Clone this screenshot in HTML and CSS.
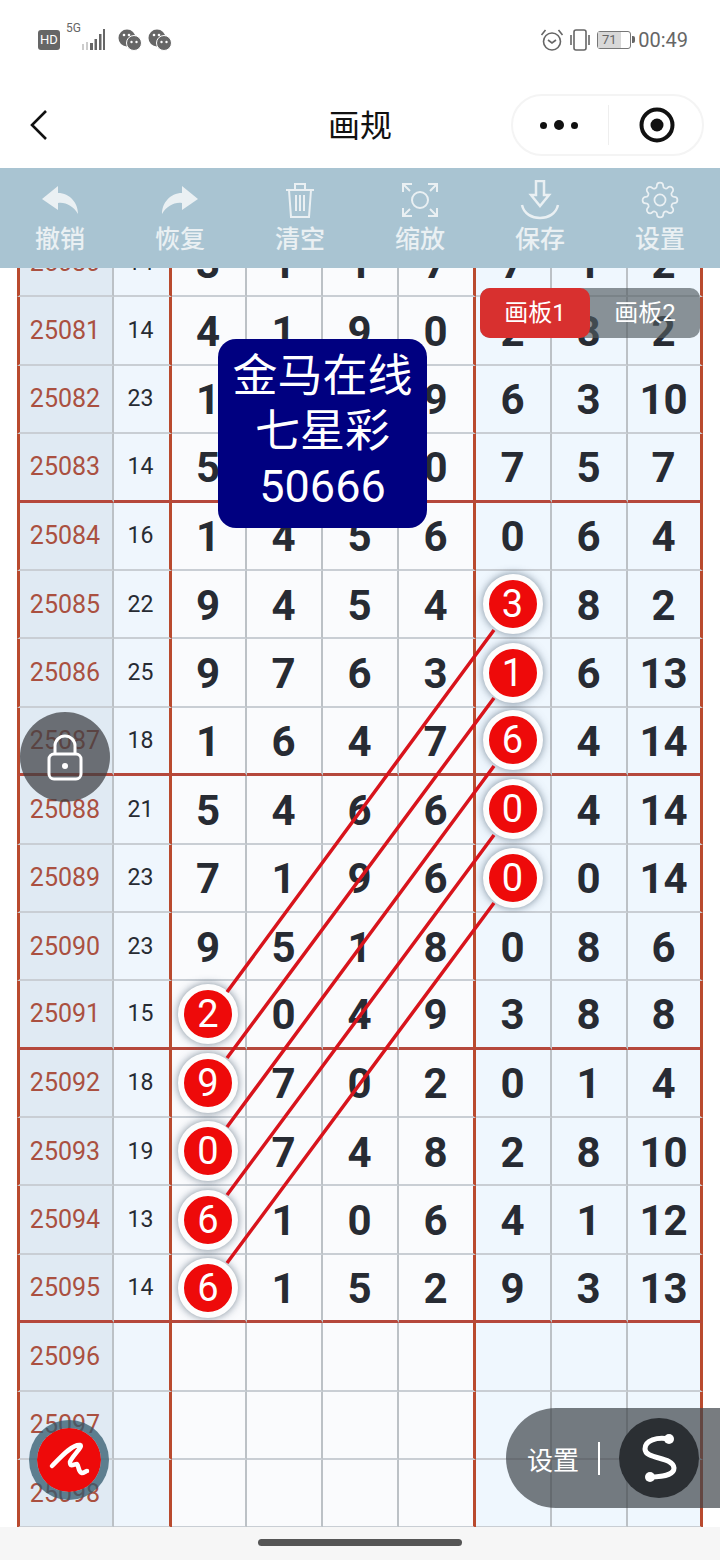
FILE: index.html
```html
<!DOCTYPE html>
<html lang="zh-CN">
  <head>
    <meta charset="UTF-8" />
    <meta name="viewport" content="width=device-width, initial-scale=1.0" />
    <title>画规</title>
    <link rel="stylesheet" href="styles.css">
  </head>
  <body>
    <div class="page">
      <div class="status">
        <div class="status-left">
          <span class="hd">HD</span>
          <span class="net">
            <span class="net-label">5G</span>
            <svg width="26" height="24" viewBox="0 0 26 24" fill="#666">
              <rect x="3" y="15" width="2" height="6" fill="#ccc"/>
              <rect x="7" y="13" width="2" height="8" fill="#ccc"/>
              <rect x="11" y="14" width="3" height="7"/>
              <rect x="15.500" y="10" width="2.500" height="11"/>
              <rect x="20" y="5" width="2.500" height="16"/>
              <rect x="24" y="0" width="2" height="21"/>
            </svg>
          </span>
          <svg class="wechat" width="24" height="22" viewBox="0 0 24 22">
            <circle cx="9" cy="9" r="8.500" fill="#666"/>
            <circle cx="16" cy="14" r="7.500" fill="#666" stroke="#fff" stroke-width="1"/>
            <circle cx="6" cy="6" r="1.300" fill="#fff"/>
            <circle cx="11" cy="6" r="1.300" fill="#fff"/>
            <circle cx="13.500" cy="13" r="1.200" fill="#fff"/>
            <circle cx="18.500" cy="13" r="1.200" fill="#fff"/>
          </svg>
          <svg class="wechat" width="24" height="22" viewBox="0 0 24 22">
            <circle cx="9" cy="9" r="8.500" fill="#666"/>
            <circle cx="16" cy="14" r="7.500" fill="#666" stroke="#fff" stroke-width="1"/>
            <circle cx="6" cy="6" r="1.300" fill="#fff"/>
            <circle cx="11" cy="6" r="1.300" fill="#fff"/>
            <circle cx="13.500" cy="13" r="1.200" fill="#fff"/>
            <circle cx="18.500" cy="13" r="1.200" fill="#fff"/>
          </svg>
        </div>
        <div class="status-right">
          <svg width="24" height="24" viewBox="0 0 24 24" fill="none" stroke="#666" stroke-width="1.600">
            <circle cx="12" cy="13.500" r="8.500"/>
            <path d="M8 12l4 3 4-3M1.500 7l4-5M22.500 7l-4-5"/>
          </svg>
          <svg width="22" height="22" viewBox="0 0 22 22" fill="none" stroke="#666" stroke-width="1.600">
            <rect x="5" y="1" width="12" height="20" rx="2"/>
            <path d="M2 6v10M20 6v10"/>
          </svg>
          <span class="battery"><span class="battery-level">71</span></span>
          <span class="clock">00:49</span>
        </div>
      </div>

      <header class="nav">
        <svg class="back" width="20" height="32" viewBox="0 0 20 32" fill="none" stroke="#111" stroke-width="2.600">
          <path d="M17 2L3 16l14 14"/>
        </svg>
        <h1>画规</h1>
        <div class="capsule">
          <div class="dots"><i></i><i class="big"></i><i></i></div>
          <div class="capsule-sep"></div>
          <svg width="36" height="36" viewBox="0 0 36 36">
            <circle cx="18" cy="18" r="15.500" fill="none" stroke="#111" stroke-width="4"/>
            <circle cx="18" cy="18" r="6.500" fill="#111"/>
          </svg>
        </div>
      </header>

      <div class="toolbar">
        <div class="tool">
          <svg width="36" height="30" viewBox="0 0 36 30"><path d="M16 1L0 14l16 11v-7c8-1 15 3 20 11 0-11-8-21-20-21z"/></svg>
          <span>撤销</span>
        </div>
        <div class="tool">
          <svg width="36" height="30" viewBox="0 0 36 30"><path d="M20 1l16 13-16 11v-7C12 17 5 21 0 29 0 18 8 8 20 8z"/></svg>
          <span>恢复</span>
        </div>
        <div class="tool">
          <svg class="line" width="32" height="38" viewBox="0 0 32 38">
            <path d="M2 9h28M11 8V3h10v5M5 9l2 27h18l2-27M12 14v16M16 14v16M20 14v16"/>
          </svg>
          <span>清空</span>
        </div>
        <div class="tool">
          <svg class="line" width="38" height="36" viewBox="0 0 38 36">
            <circle cx="19" cy="18" r="8"/>
            <path d="M2 10V2h9M2 2l7 7M36 10V2h-9M36 2l-7 7M2 26v8h9M2 34l7-7M36 26v8h-9M36 34l-7-7"/>
          </svg>
          <span>缩放</span>
        </div>
        <div class="tool">
          <svg class="line heavy" width="40" height="40" viewBox="0 0 40 40">
            <path d="M11 15h5V1h8v14h5L20 26zM2 25c2 9 10 13 18 13s16-4 18-13"/>
          </svg>
          <span>保存</span>
        </div>
        <div class="tool">
          <svg class="line thin" width="38" height="38" viewBox="0 0 24 24">
            <circle cx="12" cy="12" r="3.500"/>
            <path d="M19.400 15a1.650 1.650 0 0 0 .33 1.820l.06.06a2 2 0 0 1 0 2.830 2 2 0 0 1-2.830 0l-.06-.06a1.650 1.650 0 0 0-1.820-.33 1.650 1.650 0 0 0-1 1.510V21a2 2 0 0 1-2 2 2 2 0 0 1-2-2v-.09A1.650 1.650 0 0 0 9 19.400a1.650 1.650 0 0 0-1.820.33l-.06.06a2 2 0 0 1-2.830 0 2 2 0 0 1 0-2.830l.06-.06a1.650 1.650 0 0 0 .33-1.820 1.650 1.650 0 0 0-1.510-1H3a2 2 0 0 1-2-2 2 2 0 0 1 2-2h.09A1.650 1.650 0 0 0 4.600 9a1.650 1.650 0 0 0-.33-1.820l-.06-.06a2 2 0 0 1 0-2.830 2 2 0 0 1 2.830 0l.06.06a1.650 1.650 0 0 0 1.820.33H9a1.650 1.650 0 0 0 1-1.510V3a2 2 0 0 1 2-2 2 2 0 0 1 2 2v.09a1.650 1.650 0 0 0 1 1.510 1.650 1.650 0 0 0 1.820-.33l.06-.06a2 2 0 0 1 2.830 0 2 2 0 0 1 0 2.830l-.06.06a1.650 1.650 0 0 0-.33 1.820V9a1.650 1.650 0 0 0 1.510 1H21a2 2 0 0 1 2 2 2 2 0 0 1-2 2h-.09a1.650 1.650 0 0 0-1.510 1z"/>
          </svg>
          <span>设置</span>
        </div>
      </div>

      <div class="board">
        <div class="grid">
          <div class="row"><div>25080</div><div>14</div><div>3</div><div>1</div><div>1</div><div>7</div><div>7</div><div>1</div><div>2</div></div>
          <div class="row"><div>25081</div><div>14</div><div>4</div><div>1</div><div>9</div><div>0</div><div>2</div><div>8</div><div>2</div></div>
          <div class="row"><div>25082</div><div>23</div><div>1</div><div></div><div></div><div>9</div><div>6</div><div>3</div><div>10</div></div>
          <div class="row end"><div>25083</div><div>14</div><div>5</div><div></div><div></div><div>0</div><div>7</div><div>5</div><div>7</div></div>
          <div class="row"><div>25084</div><div>16</div><div>1</div><div>4</div><div>5</div><div>6</div><div>0</div><div>6</div><div>4</div></div>
          <div class="row"><div>25085</div><div>22</div><div>9</div><div>4</div><div>5</div><div>4</div><div><b class="ball">3</b></div><div>8</div><div>2</div></div>
          <div class="row"><div>25086</div><div>25</div><div>9</div><div>7</div><div>6</div><div>3</div><div><b class="ball">1</b></div><div>6</div><div>13</div></div>
          <div class="row end"><div>25087</div><div>18</div><div>1</div><div>6</div><div>4</div><div>7</div><div><b class="ball">6</b></div><div>4</div><div>14</div></div>
          <div class="row"><div>25088</div><div>21</div><div>5</div><div>4</div><div>6</div><div>6</div><div><b class="ball">0</b></div><div>4</div><div>14</div></div>
          <div class="row"><div>25089</div><div>23</div><div>7</div><div>1</div><div>9</div><div>6</div><div><b class="ball">0</b></div><div>0</div><div>14</div></div>
          <div class="row"><div>25090</div><div>23</div><div>9</div><div>5</div><div>1</div><div>8</div><div>0</div><div>8</div><div>6</div></div>
          <div class="row end"><div>25091</div><div>15</div><div><b class="ball">2</b></div><div>0</div><div>4</div><div>9</div><div>3</div><div>8</div><div>8</div></div>
          <div class="row"><div>25092</div><div>18</div><div><b class="ball">9</b></div><div>7</div><div>0</div><div>2</div><div>0</div><div>1</div><div>4</div></div>
          <div class="row"><div>25093</div><div>19</div><div><b class="ball">0</b></div><div>7</div><div>4</div><div>8</div><div>2</div><div>8</div><div>10</div></div>
          <div class="row"><div>25094</div><div>13</div><div><b class="ball">6</b></div><div>1</div><div>0</div><div>6</div><div>4</div><div>1</div><div>12</div></div>
          <div class="row end"><div>25095</div><div>14</div><div><b class="ball">6</b></div><div>1</div><div>5</div><div>2</div><div>9</div><div>3</div><div>13</div></div>
          <div class="row"><div>25096</div><div></div><div></div><div></div><div></div><div></div><div></div><div></div><div></div></div>
          <div class="row"><div>25097</div><div></div><div></div><div></div><div></div><div></div><div></div><div></div><div></div></div>
          <div class="row"><div>25098</div><div></div><div></div><div></div><div></div><div></div><div></div><div></div><div></div></div>
        </div>
      </div>

      <div class="home"><div class="home-bar"></div></div>

      <!-- drawn on top of the board -->
      <svg class="links" width="720" height="1560" viewBox="0 0 720 1560">
        <path d="M227 992L494 630M227 1058L494 698M227 1127L494 766M227 1195L494 835M227 1263L494 903"/>
      </svg>

      <div class="banner">金马在线<br />七星彩<br />50666</div>

      <div class="tabs">
        <div class="tab on">画板1</div>
        <div class="tab">画板2</div>
      </div>

      <div class="lock">
        <svg width="38" height="48" viewBox="0 0 38 48" fill="none" stroke="#fff" stroke-width="3">
          <rect x="3" y="21" width="32" height="25" rx="5"/>
          <path d="M9 21v-8a10 10 0 0 1 20 0v8"/>
          <circle cx="19" cy="33" r="3" fill="#fff" stroke="none"/>
        </svg>
      </div>

      <div class="pen">
        <svg width="42" height="36" viewBox="0 0 42 36" fill="none" stroke="#fff" stroke-width="4.500" stroke-linecap="round" stroke-linejoin="round">
          <path d="M4 24C12 16 24 2 32 3 36 4 24 14 22 20 22 26 26 22 29 22 31 24 30 30 34 31 36 31 38 29 39 29"/>
        </svg>
      </div>

      <div class="float">
        <span>设置</span>
        <i class="float-sep"></i>
        <div class="float-btn">
          <svg width="80" height="80" viewBox="0 0 80 80" fill="none" stroke="#fff" stroke-width="5">
            <path d="M50 21C38 19 26 22 26 31 26 42 54 38 55 50 55 57 42 59 31 59"/>
            <circle cx="50" cy="21" r="5" fill="#fff" stroke="none"/>
            <circle cx="31" cy="59" r="5" fill="#fff" stroke="none"/>
          </svg>
        </div>
      </div>
    </div>
  </body>
</html>
```

FILE: styles.css
```css
* {
  box-sizing: border-box;
}

body {
  margin: 0;
  background: #fff;
  font-family: Roboto, "Noto Sans CJK SC", sans-serif;
  color: #272b33;
}

.page {
  position: relative;
  display: flex;
  flex-direction: column;
  width: 720px;
  height: 1560px;
  overflow: hidden;
}

/* status bar */
.status {
  display: flex;
  justify-content: space-between;
  align-items: center;
  height: 80px;
  padding: 0 32px 0 38px;
  flex: none;
}

.status-left,
.status-right {
  display: flex;
  align-items: center;
}

.hd {
  width: 22px;
  height: 20px;
  border-radius: 3px;
  background: #666;
  color: #fff;
  font-size: 13px;
  line-height: 20px;
  text-align: center;
}

.net {
  position: relative;
  margin-left: 6px;
  width: 39px;
  height: 26px;
}

.net svg {
  position: absolute;
  right: 0;
  top: 2px;
}

.net-label {
  position: absolute;
  left: 0;
  top: -6px;
  font-size: 12px;
  color: #666;
}

.wechat {
  margin-left: 6px;
}

.wechat:first-of-type {
  margin-left: 13px;
}

.status-right svg {
  margin-right: 6px;
}

.status-right svg:first-child {
  margin-right: 5px;
}

.battery {
  position: relative;
  width: 34px;
  height: 18px;
  margin-right: 7px;
  border: 1.500px solid #777;
  border-radius: 3px;
  font-size: 13px;
  line-height: 15px;
  color: #666;
  text-align: center;
}

.battery::after {
  content: "";
  position: absolute;
  right: -5px;
  top: 4px;
  width: 3px;
  height: 7px;
  border-radius: 0 2px 2px 0;
  background: #666;
}

.battery-level {
  display: block;
  width: 70%;
  height: 100%;
  background: #d8d8d8;
}

.clock {
  font-size: 20px;
  color: #666;
}

/* nav */
.nav {
  position: relative;
  display: flex;
  align-items: center;
  justify-content: center;
  height: 88px;
  flex: none;
}

.nav h1 {
  margin: 0 0 3px;
  font-size: 32px;
  font-weight: 400;
  color: #111;
}

.back {
  position: absolute;
  left: 29px;
  top: 29px;
}

.capsule {
  position: absolute;
  left: 511px;
  top: 14px;
  display: flex;
  align-items: center;
  width: 193px;
  height: 62px;
  border: 2px solid #f4f4f4;
  border-radius: 31px;
}

.dots {
  display: flex;
  align-items: center;
  gap: 7px;
  margin-left: 27px;
  width: 68px;
}

.dots i {
  width: 7px;
  height: 7px;
  border-radius: 50%;
  background: #111;
}

.dots i.big {
  width: 10px;
  height: 10px;
}

.capsule-sep {
  width: 1px;
  height: 40px;
  background: #eee;
}

.capsule svg {
  margin-left: 30px;
}

/* toolbar */
.toolbar {
  display: grid;
  grid-template-columns: repeat(6, 120px);
  height: 100px;
  flex: none;
  background: #a9c4d2;
}

.tool {
  display: flex;
  flex-direction: column;
  align-items: center;
  padding-top: 12px;
  color: #eaf0f3;
  font-size: 25px;
  font-weight: 500;
  line-height: 34px;
}

.tool svg {
  height: 40px;
  fill: #eaf0f3;
}

.tool span {
  margin-top: 3px;
}

.tool svg.line {
  fill: none;
  stroke: #eaf0f3;
  stroke-width: 2;
}

.tool svg.heavy {
  stroke-width: 2.500;
}

.tool svg.thin {
  stroke-width: 1.100;
}

/* board */
.board {
  flex: 1;
  padding: 0 17px;
  overflow: hidden;
  background: #fff;
}

.grid {
  margin-top: -39px;
}

.row {
  display: grid;
  grid-template-columns: 97px 58px 75px 76px 76px 77px 76px 76px 75px;
  height: 68.400px;
}

.row > div {
  display: flex;
  align-items: center;
  justify-content: center;
  padding: 2px 1px 0 0;
  background: #fafbfd;
  border-right: 2px solid #bcc1c6;
  border-bottom: 2px solid #c9ced4;
  font-size: 42px;
  font-weight: 700;
}

.row.end > div {
  border-bottom: 3px solid #b5483c;
}

.row > div:nth-child(1) {
  padding: 0 2px 0 0;
  background: #e0eaf3;
  border-left: 3px solid #b94a2e;
  font-size: 25px;
  font-weight: 400;
  color: #aa5040;
}

.row > div:nth-child(2) {
  padding: 0 2px 0 0;
  background: #eff6fd;
  border-right: 3px solid #b94a2e;
  font-size: 23px;
  font-weight: 400;
}

.row > div:nth-child(6) {
  border-right: 3px solid #b94a2e;
}

.row > div:nth-child(n+7) {
  background: #eff7fe;
}

.row > div:nth-child(9) {
  border-right: 3px solid #b94a2e;
}

.ball {
  display: flex;
  align-items: center;
  justify-content: center;
  flex: none;
  width: 60px;
  height: 60px;
  margin-top: -2px;
  border: 6px solid #fdfdfd;
  border-radius: 50%;
  background: #ee0a0a;
  box-shadow: 0 0 8px rgba(70, 90, 110, 0.7);
  color: #fff;
  font-size: 38px;
  font-weight: 400;
}

.home {
  display: flex;
  justify-content: center;
  height: 33px;
  flex: none;
  padding-top: 12px;
  background: #f6f6f6;
}

.home-bar {
  width: 204px;
  height: 7px;
  border-radius: 4px;
  background: #555;
}

/* overlays */
.links {
  position: absolute;
  left: 0;
  top: 0;
  pointer-events: none;
}

.links path {
  fill: none;
  stroke: #d8141c;
  stroke-width: 3.500;
}

.banner {
  position: absolute;
  left: 218px;
  top: 339px;
  width: 209px;
  height: 189px;
  padding-top: 10px;
  border-radius: 18px;
  background: #000080;
  color: #fff;
  font-size: 45px;
  line-height: 55px;
  text-align: center;
}

.tabs {
  position: absolute;
  left: 480px;
  top: 288px;
  display: flex;
  width: 220px;
  height: 50px;
  border-radius: 10px;
  background: rgba(80, 90, 95, 0.65);
}

.tab {
  flex: 1;
  border-radius: 10px;
  color: #fff;
  font-size: 24px;
  line-height: 50px;
  text-align: center;
}

.tab.on {
  background: #d8302f;
}

.lock {
  position: absolute;
  left: 20px;
  top: 712px;
  display: flex;
  align-items: center;
  justify-content: center;
  width: 90px;
  height: 90px;
  border-radius: 50%;
  background: rgba(60, 62, 66, 0.72);
}

.pen {
  position: absolute;
  left: 29px;
  top: 1420px;
  display: flex;
  align-items: center;
  justify-content: center;
  width: 80px;
  height: 80px;
  border: 8px solid rgba(50, 90, 110, 0.75);
  border-radius: 50%;
  background: #ee0a0a;
  background-clip: padding-box;
}

.float {
  position: absolute;
  left: 506px;
  top: 1408px;
  display: flex;
  align-items: center;
  width: 214px;
  height: 100px;
  padding-left: 21px;
  border-radius: 50px 0 0 50px;
  background: rgba(62, 68, 74, 0.7);
  color: #fff;
  font-size: 26px;
}

.float-sep {
  width: 2px;
  height: 33px;
  margin-left: 19px;
  background: #fff;
}

.float-btn {
  width: 80px;
  height: 80px;
  margin-left: 19px;
  border-radius: 50%;
  background: #2b2f33;
}

.float-btn svg {
  display: block;
}
```
